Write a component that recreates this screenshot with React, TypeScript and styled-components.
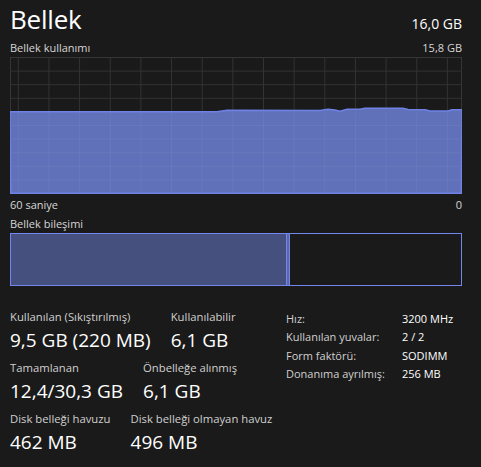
import styled, { createGlobalStyle } from "styled-components";

const GlobalStyle = createGlobalStyle`
  html, body {
    margin: 0;
    padding: 0;
    background: #1a1a1a;
  }
  body {
    font-family: "Open Sans", "Noto Sans", sans-serif;
    color: #ffffff;
  }
`;

const Page = styled.div`
  width: 481px;
  height: 467px;
  box-sizing: border-box;
  padding: 0 19px 0 10px;
  background: #1a1a1a;
  overflow: hidden;
`;

const Header = styled.div`
  display: flex;
  justify-content: space-between;
  align-items: baseline;
  height: 38px;
`;

const Title = styled.h1`
  margin: 0;
  font-size: 26px;
  font-weight: 400;
  line-height: 38px;
  letter-spacing: -0.2px;
`;

const Total = styled.span`
  font-size: 14px;
`;

const Row = styled.div<{ $height: number }>`
  display: flex;
  justify-content: space-between;
  align-items: center;
  height: ${(p) => p.$height}px;
  font-size: 11px;
  color: #d6d6d6;
`;

const Graph = styled.div`
  width: 452px;
  height: 137px;
`;

const Composition = styled.div`
  display: flex;
  width: 452px;
  height: 53px;
  box-sizing: border-box;
  border: 1.5px solid #7386ec;
`;

const Segment = styled.div<{ $width: number; $fill: string }>`
  width: ${(p) => p.$width}px;
  flex: ${(p) => (p.$width ? "none" : "1")};
  background: ${(p) => p.$fill};
  border-right: ${(p) => (p.$width ? "1.5px solid #7386ec" : "none")};
`;

const Stats = styled.div`
  display: flex;
  margin-top: 23px;
`;

const Tiles = styled.div`
  width: 276px;
  display: flex;
  flex-direction: column;
  gap: 5px;
`;

const TileRow = styled.div`
  display: flex;
  gap: 20px;
`;

const Tile = styled.div`
  display: flex;
  flex-direction: column;
`;

const TileLabel = styled.span`
  font-size: 11.3px;
  line-height: 16px;
  color: #d0d0d0;
  white-space: nowrap;
`;

const TileValue = styled.span`
  font-size: 19px;
  line-height: 30px;
  white-space: nowrap;
`;

const Specs = styled.dl`
  margin: 0;
  display: grid;
  grid-template-columns: 116px auto;
  grid-auto-rows: 18.5px;
  align-items: center;
  font-size: 11px;
`;

const SpecKey = styled.dt`
  color: #d0d0d0;
  white-space: nowrap;
`;

const SpecVal = styled.dd`
  margin: 0;
  color: #ffffff;
  white-space: nowrap;
`;

const W = 452;
const H = 137;

const usage: [number, number][] = [
  [0, 54.7], [207, 54.7], [217, 53.3], [310, 53.5], [318, 52.3], [325, 53],
  [330, 54.2], [337, 52.3], [350, 52.3], [355, 51.3], [393, 51.3], [398, 52.6],
  [415, 52.7], [420, 54], [438, 54], [442, 52.7], [452, 52.7],
];

function UsageChart() {
  const vLines: number[] = [];
  for (let x = 8.3; x < W; x += 30.65) vLines.push(x);
  const hLines: number[] = [];
  for (let i = 1; i < 10; i++) hLines.push(0.5 + i * 13.6);
  const top = usage.map(([x, y]) => `${x},${y}`).join(" ");
  const area = `0.75,${H - 0.75} ${top} ${W - 0.75},${H - 0.75}`;
  return (
    <svg width={W} height={H} viewBox={`0 0 ${W} ${H}`}>
      <rect x={0.5} y={0.5} width={W - 1} height={H - 1} fill="#1a1a1a" stroke="#363636" />
      {vLines.map((x) => (
        <line key={x} x1={x} y1={0} x2={x} y2={H} stroke="#333333" />
      ))}
      {hLines.map((y) => (
        <line key={y} x1={0} y1={y} x2={W} y2={y} stroke="#333333" />
      ))}
      <polygon points={area} fill="#6171b9" stroke="#6f82e6" strokeWidth={1.5} />
      {vLines.map((x) => (
        <line key={"o" + x} x1={x} y1={56} x2={x} y2={H - 1.5} stroke="rgba(255,255,255,0.05)" />
      ))}
      {hLines.filter((y) => y > 56).map((y) => (
        <line key={"o" + y} x1={1.5} y1={y} x2={W - 1.5} y2={y} stroke="rgba(255,255,255,0.05)" />
      ))}
    </svg>
  );
}

const tiles = [
  [
    ["Kullanılan (Sıkıştırılmış)", "9,5 GB (220 MB)"],
    ["Kullanılabilir", "6,1 GB"],
  ],
  [
    ["Tamamlanan", "12,4/30,3 GB"],
    ["Önbelleğe alınmış", "6,1 GB"],
  ],
  [
    ["Disk belleği havuzu", "462 MB"],
    ["Disk belleği olmayan havuz", "496 MB"],
  ],
];

const specs = [
  ["Hız:", "3200 MHz"],
  ["Kullanılan yuvalar:", "2 / 2"],
  ["Form faktörü:", "SODIMM"],
  ["Donanıma ayrılmış:", "256 MB"],
];

export default function App() {
  return (
    <Page>
      <GlobalStyle />
      <Header>
        <Title>Bellek</Title>
        <Total>16,0 GB</Total>
      </Header>
      <Row $height={19}>
        <span>Bellek kullanımı</span>
        <span>15,8 GB</span>
      </Row>
      <Graph>
        <UsageChart />
      </Graph>
      <Row $height={20}>
        <span>60 saniye</span>
        <span>0</span>
      </Row>
      <Row $height={19}>
        <span>Bellek bileşimi</span>
      </Row>
      <Composition>
        <Segment $width={275} $fill="#45507e" />
        <Segment $width={2} $fill="#5a67a8" />
        <Segment $width={0} $fill="transparent" />
      </Composition>
      <Stats>
        <Tiles>
          {tiles.map((row, i) => (
            <TileRow key={i}>
              {row.map(([label, value]) => (
                <Tile key={label}>
                  <TileLabel>{label}</TileLabel>
                  <TileValue>{value}</TileValue>
                </Tile>
              ))}
            </TileRow>
          ))}
        </Tiles>
        <Specs>
          {specs.map(([k, v]) => (
            <>
              <SpecKey key={k}>{k}</SpecKey>
              <SpecVal key={v}>{v}</SpecVal>
            </>
          ))}
        </Specs>
      </Stats>
    </Page>
  );
}
